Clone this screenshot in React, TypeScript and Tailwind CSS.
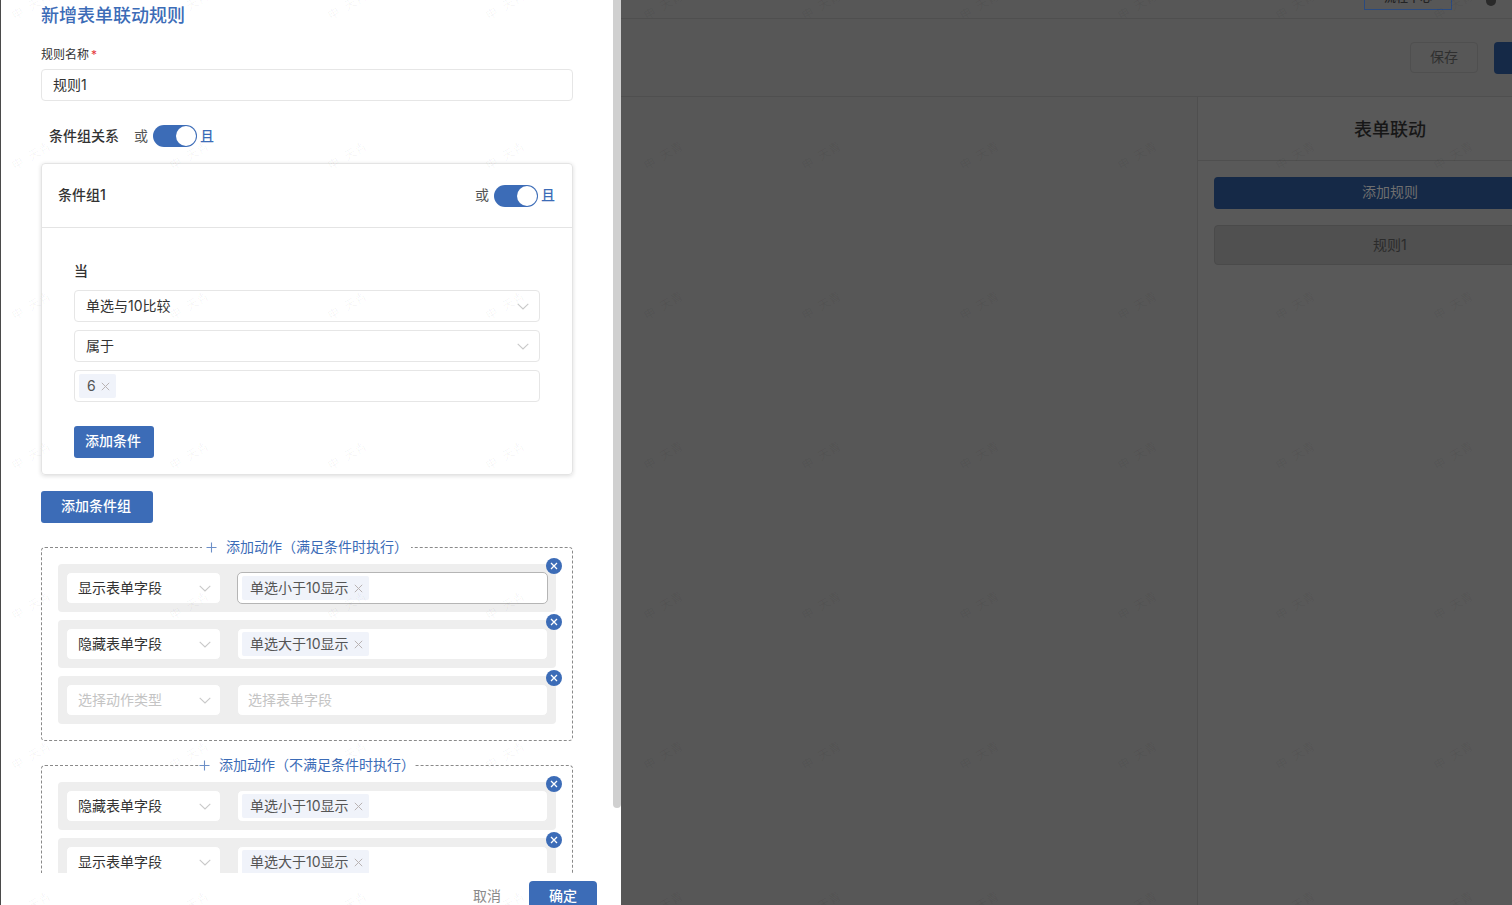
import type { ReactNode } from 'react';

const cjk = "font-['Inter','Noto_Sans_CJK_SC',sans-serif]";

function Chevron() {
  return (
    <svg width="12" height="7" viewBox="0 0 12 7" fill="none" className="shrink-0">
      <path d="M0.7 0.8 6 6 11.3 0.8" stroke="#c9c9c9" strokeWidth="1.1" />
    </svg>
  );
}

function TagClose() {
  return (
    <svg width="9" height="9" viewBox="0 0 9 9" fill="none" className="shrink-0">
      <path d="M0.8 0.8 8.2 8.2M8.2 0.8 0.8 8.2" stroke="#b9b3b3" strokeWidth="1" />
    </svg>
  );
}

function Plus() {
  return (
    <svg width="11" height="11" viewBox="0 0 11 11" fill="none" className="shrink-0">
      <path d="M5.5 0.5v10M0.5 5.5h10" stroke="#6c8fc7" strokeWidth="1.1" />
    </svg>
  );
}

function Toggle() {
  return (
    <div className="flex h-[22px] w-[44px] items-center justify-end rounded-full bg-[#3c6cb7] pr-[1px]">
      <div className="h-[20px] w-[20px] rounded-full bg-white" />
    </div>
  );
}

function AndOr() {
  return (
    <div className="flex items-center text-[14px]">
      <span className="mr-[5px] pb-[2px] text-[#555]">或</span>
      <Toggle />
      <span className="ml-[3px] pb-[2px] font-medium text-[#3c6cb7]">且</span>
    </div>
  );
}

function Tag({ label }: { label: string }) {
  return (
    <span className="flex h-[24px] items-center gap-[5px] rounded-[2px] bg-[#f0f3fa] pl-[8px] pr-[6px] text-[14px] text-[#555]">
      <span className="pb-[2px]">{label}</span>
      <TagClose />
    </span>
  );
}

function CondSelect({ value }: { value: string }) {
  return (
    <div className="flex h-[32px] items-center justify-between rounded-[4px] border border-[#e6e6e6] bg-white pl-[11px] pr-[10px] text-[14px] text-[#333]">
      <span className="pb-[2px]">{value}</span>
      <Chevron />
    </div>
  );
}

function ActionRow({ action, field, focused }: { action?: string; field?: string; focused?: boolean }) {
  return (
    <div className="relative flex h-[48px] shrink-0 items-center rounded-[4px] bg-[#eeeeee] pl-[8px] pr-[8px]">
      <div className="flex h-[32px] w-[155px] shrink-0 items-center justify-between rounded-[5px] border border-[#eeeeee] bg-white pl-[11px] pr-[9px] text-[14px]">
        <span className={`pb-[2px] ${action ? 'text-[#333]' : 'text-[#c4c4c4]'}`}>{action ?? '选择动作类型'}</span>
        <Chevron />
      </div>
      <div
        className={`ml-[16px] flex h-[32px] flex-1 items-center rounded-[5px] border bg-white pl-[4px] text-[14px] ${
          focused ? 'border-[#b5b5b5]' : 'border-[#eeeeee]'
        }`}
      >
        {field ? <Tag label={field} /> : <span className="pb-[2px] pl-[6px] text-[#c4c4c4]">选择表单字段</span>}
      </div>
      {/* delete badge */}
      <div className="absolute right-[-6px] top-[-6px] flex h-[16px] w-[16px] items-center justify-center rounded-full bg-[#3c6cb7]">
        <svg width="8" height="8" viewBox="0 0 8 8" fill="none">
          <path d="M1 1 7 7M7 1 1 7" stroke="#fff" strokeWidth="1.3" />
        </svg>
      </div>
    </div>
  );
}

function ActionGroup({
  legend,
  legendClass,
  children,
}: {
  legend: string;
  legendClass: string;
  children: ReactNode;
}) {
  return (
    <div className="relative rounded-[4px] border border-dashed border-[#8a8a8a] pb-[16px] pl-[16px] pr-[16px] pt-[16px]">
      <div
        className={`absolute top-[-12px] flex h-[22px] items-center gap-[9px] whitespace-nowrap bg-white text-[14px] text-[#3c6cb7] ${legendClass}`}
      >
        <Plus />
        <span className="pb-[2px]">{legend}</span>
      </div>
      <div className="flex flex-col gap-[8px]">{children}</div>
    </div>
  );
}

function Watermarks({ tone, offset }: { tone: string; offset: string }) {
  return (
    <div className={`pointer-events-none absolute top-[-69px] flex w-[1738px] flex-wrap ${offset}`}>
      {Array.from({ length: 77 }).map((_, i) => (
        <div key={i} className="flex h-[150px] w-[158px] items-center justify-center">
          <span className={`-rotate-[30deg] text-[12px] whitespace-pre ${tone}`}>申  天青</span>
        </div>
      ))}
    </div>
  );
}

function Backdrop() {
  return (
    <div className="flex min-w-0 flex-1 flex-col overflow-hidden bg-[#575757] text-[14px] text-[#2b2b2b]">
      <div className="flex h-[19px] shrink-0 items-start justify-end border-b border-[#4f4f4f] pr-[16px]">
        <div className="flex h-[10px] w-[88px] items-start justify-center overflow-hidden border border-t-0 border-[#2a4a7f]">
          <span className="-mt-[8px] text-[12px] font-medium leading-[12px] text-[#232323]">流程中心</span>
        </div>
        <div className="ml-[34px] h-[6px] w-[10px] rounded-b-full bg-[#2a2a2a]" />
      </div>
      <div className="flex h-[78px] shrink-0 items-start border-b border-[#4f4f4f] pl-[789px] pt-[23px]">
        <div className="flex h-[31px] w-[68px] shrink-0 items-center justify-center rounded-[4px] border border-[#4f4f4f] pb-[2px] text-[#2f2f2f]">
          保存
        </div>
        <div className="ml-[16px] h-[32px] w-[60px] shrink-0 rounded-[4px] bg-[#152947]" />
      </div>
      <div className="flex flex-1">
        <div className="w-[577px] shrink-0 border-r border-[#4f4f4f]" />
        <div className="flex w-[400px] shrink-0 flex-col bg-[#595959]">
          <div className="flex h-[64px] shrink-0 items-center border-b border-[#4f4f4f] pl-[156px] pt-[2px] text-[18px] font-medium text-[#171717]">
            表单联动
          </div>
          <div className="flex flex-col gap-[16px] pl-[16px] pt-[16px]">
            <div className="flex h-[32px] items-center rounded-[4px] bg-[#152947] pb-[4px] pl-[148px] text-[#6f6f6f]">添加规则</div>
            <div className="flex h-[40px] items-center rounded-[4px] border border-[#4a4a4a] bg-[#505050] pb-[2px] pl-[158px] text-[#2b2b2b]">
              规则1
            </div>
          </div>
        </div>
      </div>
    </div>
  );
}

export default function App() {
  return (
    <div className={`relative flex h-[905px] w-[1512px] overflow-hidden bg-[#575757] ${cjk}`}>
      <div className="w-[1px] shrink-0 bg-[#4a4a4a]" />
      {/* drawer */}
      <div className="relative flex h-full w-[620px] shrink-0 flex-col overflow-hidden bg-white">
        <div className="h-[873px] shrink-0 overflow-hidden pl-[40px] pr-[48px] pt-[4px]">
          <h2 className="text-[18px] font-medium leading-[24px] text-[#3c6cb7]">新增表单联动规则</h2>

          <div className="mt-[18px] text-[12px] leading-[18px] text-[#333]">
            规则名称<span className="ml-[2px] text-[#e5383b]">*</span>
          </div>
          <div className="mt-[5px] flex h-[32px] items-center rounded-[4px] border border-[#e6e6e6] pb-[2px] pl-[11px] text-[14px] text-[#333]">
            规则1
          </div>

          <div className="mt-[24px] flex h-[22px] items-center pl-[8px]">
            <span className="mr-[15px] pb-[2px] text-[14px] font-medium text-[#333]">条件组关系</span>
            <AndOr />
          </div>

          <div className="mt-[16px] rounded-[4px] border border-[#e4e4e4] shadow-[0_1px_4px_rgba(0,0,0,0.14)]">
            <div className="flex h-[64px] items-center justify-between border-b border-[#e4e4e4] pl-[16px] pr-[17px]">
              <span className="pb-[2px] text-[14px] font-medium text-[#333]">条件组1</span>
              <AndOr />
            </div>
            <div className="px-[32px] pb-[16px] pt-[33px]">
              <div className="text-[14px] font-medium leading-[20px] text-[#333]">当</div>
              <div className="mt-[9px] flex flex-col gap-[8px]">
                <CondSelect value="单选与10比较" />
                <CondSelect value="属于" />
                <div className="flex h-[32px] items-center rounded-[4px] border border-[#e6e6e6] pl-[4px]">
                  <Tag label="6" />
                </div>
              </div>
              <button className="mt-[24px] flex h-[32px] w-[80px] items-center justify-center rounded-[3px] bg-[#3c6cb7] pb-[4px] pr-[2px] text-[14px] font-medium text-white">
                添加条件
              </button>
            </div>
          </div>

          <button className="mt-[16px] flex h-[32px] w-[112px] items-center justify-center rounded-[3px] bg-[#3c6cb7] pb-[4px] pr-[2px] text-[14px] font-medium text-white">
            添加条件组
          </button>

          <div className="mt-[24px] flex flex-col gap-[24px]">
            <ActionGroup legend="添加动作（满足条件时执行）" legendClass="left-[160px] pl-[4px] pr-[3px]">
              <ActionRow action="显示表单字段" field="单选小于10显示" focused />
              <ActionRow action="隐藏表单字段" field="单选大于10显示" />
              <ActionRow />
            </ActionGroup>
            <ActionGroup legend="添加动作（不满足条件时执行）" legendClass="left-[157px]">
              <ActionRow action="隐藏表单字段" field="单选小于10显示" />
              <ActionRow action="显示表单字段" field="单选大于10显示" />
            </ActionGroup>
          </div>
        </div>

        <div className="flex h-[32px] shrink-0 items-start justify-end pr-[24px] pt-[8px]">
          <span className="mr-[28px] mt-[4px] text-[14px] text-[#8a8a8a]">取消</span>
          <button className="flex h-[32px] w-[68px] items-center justify-center rounded-[4px] bg-[#3c6cb7] pb-[4px] text-[14px] font-medium text-white">
            确定
          </button>
        </div>

        {/* scrollbar thumb */}
        <div className="absolute right-0 top-0 h-[808px] w-[8px] rounded-b-[4px] bg-[#d0d0d0]" />
        <Watermarks tone="text-black/[0.04]" offset="left-[-49px]" />
      </div>
      <Backdrop />
      {/* watermark layer over the dimmed page */}
      <div className="pointer-events-none absolute bottom-0 left-[621px] right-0 top-0 overflow-hidden">
        <Watermarks tone="text-black/[0.06]" offset="left-[-195px]" />
      </div>
    </div>
  );
}
